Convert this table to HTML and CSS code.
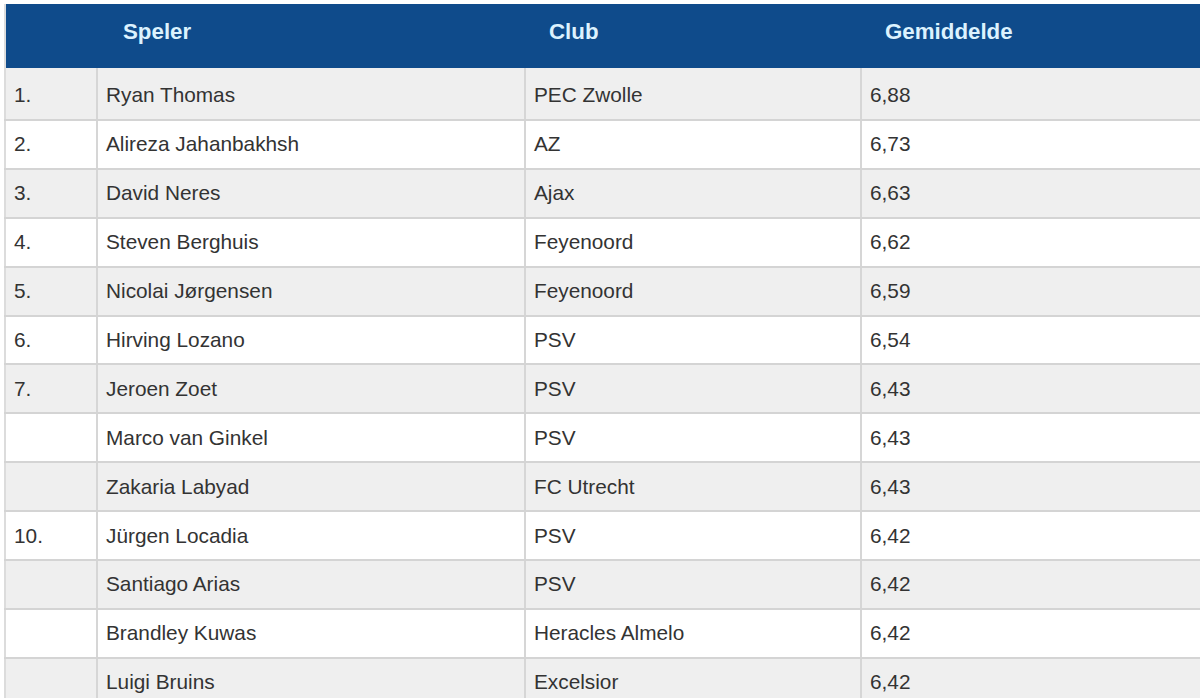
FILE: index.html
```html
<!DOCTYPE html>
<html lang="nl">
<head>
<meta charset="utf-8">
<title>Gemiddelde</title>
<link rel="stylesheet" href="styles.css">
</head>
<body>
<table class="ranking">
  <colgroup>
    <col class="c-rank">
    <col class="c-player">
    <col class="c-club">
    <col class="c-avg">
  </colgroup>
  <thead>
    <tr>
      <th class="h-rank"></th>
      <th>Speler</th>
      <th>Club</th>
      <th>Gemiddelde</th>
    </tr>
  </thead>
  <tbody>
    <tr><td>1.</td><td>Ryan Thomas</td><td>PEC Zwolle</td><td>6,88</td></tr>
    <tr><td>2.</td><td>Alireza Jahanbakhsh</td><td>AZ</td><td>6,73</td></tr>
    <tr><td>3.</td><td>David Neres</td><td>Ajax</td><td>6,63</td></tr>
    <tr><td>4.</td><td>Steven Berghuis</td><td>Feyenoord</td><td>6,62</td></tr>
    <tr><td>5.</td><td>Nicolai Jørgensen</td><td>Feyenoord</td><td>6,59</td></tr>
    <tr><td>6.</td><td>Hirving Lozano</td><td>PSV</td><td>6,54</td></tr>
    <tr><td>7.</td><td>Jeroen Zoet</td><td>PSV</td><td>6,43</td></tr>
    <tr><td></td><td>Marco van Ginkel</td><td>PSV</td><td>6,43</td></tr>
    <tr><td></td><td>Zakaria Labyad</td><td>FC Utrecht</td><td>6,43</td></tr>
    <tr><td>10.</td><td>Jürgen Locadia</td><td>PSV</td><td>6,42</td></tr>
    <tr><td></td><td>Santiago Arias</td><td>PSV</td><td>6,42</td></tr>
    <tr><td></td><td>Brandley Kuwas</td><td>Heracles Almelo</td><td>6,42</td></tr>
    <tr><td></td><td>Luigi Bruins</td><td>Excelsior</td><td>6,42</td></tr>
  </tbody>
</table>
</body>
</html>
```
FILE: styles.css
```css
html, body {
  margin: 0;
  padding: 0;
  background: #ffffff;
  overflow: hidden;
}

body {
  padding: 4px 0 0 4px;
  font-family: Arial, "Liberation Sans", sans-serif;
}

.ranking {
  border-collapse: collapse;
  table-layout: fixed;
  width: 1220px;
  border-left: 2px solid #dcdcdc;
}

.c-rank { width: 92px; }
.c-player { width: 428px; }
.c-club { width: 336px; }
.c-avg { width: 364px; }

.ranking thead th {
  background: #0f4b8b;
  color: #dcf2fe;
  font-size: 22.3px;
  font-weight: bold;
  text-align: left;
  height: 64px;
  box-sizing: border-box;
  padding: 0 0 8px 24px;
  vertical-align: middle;
  border: 0;
}

.ranking thead th:nth-child(2) {
  padding-left: 26px;
}

.ranking tbody td {
  height: 48.9px;
  box-sizing: border-box;
  padding: 0 0 0 8px;
  font-size: 20.8px;
  color: #333333;
  vertical-align: middle;
  border-bottom: 2px solid #d4d4d4;
  border-left: 2px solid #d6d6d6;
  white-space: nowrap;
}

.ranking tbody td:first-child {
  border-left: 0;
}

.ranking tbody tr:first-child td {
  height: 52px;
  padding-top: 2px;
}

.ranking tbody tr:nth-child(odd) td {
  background: #efefef;
}

.ranking tbody tr:nth-child(even) td {
  background: #ffffff;
}
```
